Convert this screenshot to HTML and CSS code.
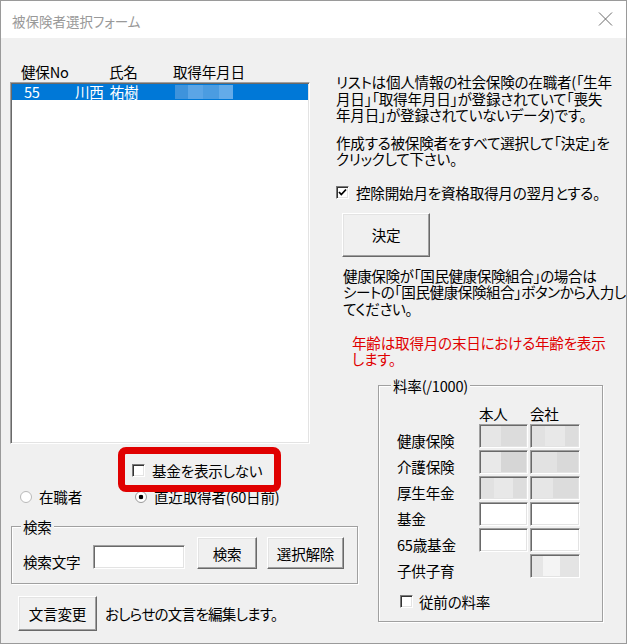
FILE: index.html
```html
<!DOCTYPE html>
<html lang="ja">
<head>
<meta charset="utf-8">
<title>被保険者選択フォーム</title>
<link rel="stylesheet" href="styles.css">
</head>
<body>
<div class="window">
  <div class="titlebar">
    <span class="title">被保険者選択フォーム</span>
    <svg class="close" viewBox="0 0 15 14" width="15" height="14"><path d="M1 0.5 L14 13.5 M14 0.5 L1 13.5" stroke="#6a6a6a" stroke-width="1" fill="none"/></svg>
  </div>
  <div class="client">
    <div class="left">
      <div class="list-head"><span class="h1">健保No</span><span class="h2">氏名</span><span>取得年月日</span></div>
      <div class="listbox">
        <div class="row selected"><span class="r1">55</span><span class="r2">川西 祐樹</span><span class="blur"></span></div>
      </div>
      <div class="kikin-row">
        <label class="check"><span class="box"></span>基金を表示しない</label>
        <div class="highlight"></div>
      </div>
      <div class="radio-row">
        <label class="radio first"><span class="dot"></span>在職者</label>
        <label class="radio"><span class="dot on"></span>直近取得者(60日前)</label>
      </div>
      <fieldset class="group search">
        <legend>検索</legend>
        <div class="search-row">
          <span class="lbl">検索文字</span>
          <span class="textbox search-box"></span>
          <span class="btn btn-search">検索</span>
          <span class="btn btn-clear">選択解除</span>
        </div>
      </fieldset>
      <div class="bottom-row">
        <span class="btn btn-edit">文言変更</span>
        <span class="note">おしらせの文言を編集します。</span>
      </div>
    </div>
    <div class="right">
      <p class="para p1">リストは個人情報の社会保険の在職者(「生年<br>月日」「取得年月日」が登録されていて「喪失<br>年月日」が登録されていないデータ)です。</p>
      <p class="para p2">作成する被保険者をすべて選択して「決定」を<br>クリックして下さい。</p>
      <label class="check right-check"><span class="box checked"><svg viewBox="0 0 11 11" width="11" height="11"><path d="M2 5 L4.3 7.5 L9 2.5" stroke="#000" stroke-width="1.8" fill="none"/></svg></span>控除開始月を資格取得月の翌月とする。</label>
      <span class="btn btn-ok">決定</span>
      <p class="para p3">健康保険が「国民健康保険組合」の場合は<br>シートの「国民健康保険組合」ボタンから入力し<br>てください。</p>
      <p class="para p4">年齢は取得月の末日における年齢を表示<br>します。</p>
      <fieldset class="group rate">
        <legend>料率(/1000)</legend>
        <div class="rate-grid">
          <span></span><span class="colhead">本人</span><span class="colhead">会社</span>
          <span class="rl">健康保険</span><span class="textbox dis d1"></span><span class="textbox dis d2"></span>
          <span class="rl">介護保険</span><span class="textbox dis d3"></span><span class="textbox dis d4"></span>
          <span class="rl">厚生年金</span><span class="textbox dis d2"></span><span class="textbox dis d1"></span>
          <span class="rl">基金</span><span class="textbox"></span><span class="textbox"></span>
          <span class="rl">65歳基金</span><span class="textbox"></span><span class="textbox"></span>
          <span class="rl">子供子育</span><span></span><span class="textbox dis d5"></span>
        </div>
        <label class="check prev-check"><span class="box"></span>従前の料率</label>
      </fieldset>
    </div>
  </div>
</div>
</body>
</html>
```

FILE: styles.css
```css
* { box-sizing: border-box; }
html, body { margin: 0; padding: 0; background: #fff; }
body {
  font-family: "Noto Sans CJK JP", "Noto Sans", sans-serif;
  font-size: 14.6px;
  line-height: 17px;
  color: #000;
  font-feature-settings: "palt";
  letter-spacing: -0.25px;
}
.window {
  width: 627px;
  height: 644px;
  border: 1px solid #9a9a9a;
  display: flex;
  flex-direction: column;
  overflow: hidden;
}
.titlebar {
  height: 37px;
  flex: none;
  background: #fff;
  display: flex;
  align-items: center;
  justify-content: space-between;
  padding: 3px 13px 0 11px;
}
.title { color: #999; font-size: 13.5px; letter-spacing: 0; }
.close { margin-top: -4px; }

.client {
  flex: 1;
  background: #f0f0f0;
  display: flex;
  padding-left: 9px;
}
.left { width: 326px; flex: none; padding-top: 25px; }
.right { flex: 1; padding-top: 36px; display: flex; flex-direction: column; align-items: flex-start; }

.list-head { display: flex; padding-left: 11px; height: 17px; margin-bottom: 2px; white-space: nowrap; }
.h1 { width: 88px; }
.h2 { width: 64px; }

.listbox {
  width: 300px;
  height: 362px;
  background: #fff;
  border: 1px solid;
  border-color: #a0a0a0 #fff #fff #a0a0a0;
  box-shadow: inset 1px 1px 0 #696969, inset -1px -1px 0 #e3e3e3;
  padding: 1px;
}
.row { height: 16px; line-height: 16px; display: flex; padding-left: 12px; white-space: nowrap; }
.row.selected { background: #0078d7; color: #fff; }
.r1 { width: 51px; }
.r2 { width: 100px; word-spacing: 3px; }
.blur {
  width: 58px;
  height: 14px;
  margin-top: 1px;
  background: linear-gradient(90deg, #3e93dc 0 22%, #5ba5e6 22% 48%, #4b9ce1 48% 76%, #63abe9 76%);
}

.textbox {
  display: block;
  background: #fff;
  border: 1px solid;
  border-color: #a0a0a0 #fff #fff #a0a0a0;
  box-shadow: inset 1px 1px 0 #696969, inset -1px -1px 0 #e3e3e3;
}
.dis.d1 { background: linear-gradient(90deg, #e6e6e6 0 45%, #dcdcdc 45% 100%); }
.dis.d2 { background: linear-gradient(90deg, #e1e1e1 0 30%, #e8e8e8 30% 70%, #dddddd 70%); }
.dis.d3 { background: linear-gradient(90deg, #e9e9e9 0 45%, #d6d6d6 45% 100%); }
.dis.d4 { background: linear-gradient(90deg, #e2e2e2 0 55%, #d9d9d9 55% 100%); }
.dis.d5 { background: linear-gradient(90deg, #e6e6e6 0 25%, #f4f4f4 25% 60%, #e4e4e4 60%); }

.btn {
  display: flex;
  align-items: center;
  justify-content: center;
  background: #f0f0f0;
  border: 1px solid;
  border-color: #fff #696969 #696969 #fff;
  box-shadow: inset -1px -1px 0 #a0a0a0, inset 1px 1px 0 #e3e3e3;
  white-space: nowrap;
  flex: none;
}

.check { display: flex; align-items: center; white-space: nowrap; }
.box {
  width: 13px;
  height: 13px;
  flex: none;
  background: #fff;
  border: 1px solid;
  border-color: #7a7a7a #fff #fff #7a7a7a;
  box-shadow: inset 1px 1px 0 #333, inset -1px -1px 0 #e3e3e3;
  margin-right: 7px;
  display: flex;
  align-items: center;
  justify-content: center;
}
.box svg { display: block; }

.kikin-row { position: relative; margin-top: 18px; height: 17px; padding-left: 122px; }
.highlight {
  position: absolute;
  left: 108px;
  top: -15px;
  width: 163px;
  height: 45px;
  border: 7px solid #e00000;
  border-radius: 8px;
}

.radio-row { display: flex; margin-top: 9px; height: 17px; padding-left: 10px; white-space: nowrap; }
.radio { display: flex; align-items: center; }
.radio.first { width: 115px; }
.dot {
  width: 12px;
  height: 12px;
  border-radius: 50%;
  border: 1px solid #b9b9b9;
  background: #fff;
  margin-right: 7px;
}
.dot.on { background: radial-gradient(circle, #000 0 2px, #fff 2.6px); border-color: #9a9a9a; }

.group {
  margin: 0;
  border: 1px solid #a0a0a0;
  box-shadow: inset 1px 1px 0 #fff, 1px 1px 0 #fff;
  min-width: 0;
}
.group legend {
  padding: 0 2px;
  line-height: 17px;
  height: 17px;
  background: #f0f0f0;
  white-space: nowrap;
}
.search { margin: 13px 0 0 1px; width: 347px; padding: 2px 12px 14px 11px; }
.search legend { margin-left: -2px; }
.search-row { display: flex; align-items: flex-end; height: 32px; }
.lbl { width: 70px; margin-bottom: -1px; white-space: nowrap; }
.search-box { width: 92px; height: 24px; }
.btn-search { width: 60px; height: 32px; margin-left: 12px; }
.btn-clear { width: 77px; height: 32px; margin-left: 10px; }

.bottom-row { display: flex; align-items: center; margin-top: 12px; padding-left: 8px; }
.btn-edit { width: 79px; height: 35px; }
.note { margin-left: 8px; white-space: nowrap; letter-spacing: -0.8px; }

.para { margin: 0; line-height: 16.5px; white-space: nowrap; }
.p2 { margin-top: 11px; }
.right-check { margin-top: 16px; height: 17px; }
.btn-ok { width: 88px; height: 44px; margin: 12px 0 0 6px; }
.p3 { margin: 11px 0 0 7px; letter-spacing: -0.45px; }
.p4 { margin: 17.5px 0 0 16px; color: #e00000; }

.rate { margin: 9px 0 0 42px; width: 225px; padding: 11px 0 11px 18px; }
.rate legend { margin-left: -6px; }
.rate-grid {
  display: grid;
  grid-template-columns: 80px 49px 50px;
  grid-template-rows: 17px repeat(6, 24px);
  column-gap: 2px;
  row-gap: 2px;
}
.colhead { white-space: nowrap; }
.rl { align-self: end; white-space: nowrap; margin-bottom: -1px; }
.prev-check { margin-top: 15.5px; padding-left: 3px; height: 17px; }
.prev-check .box { margin-right: 6px; }
```
